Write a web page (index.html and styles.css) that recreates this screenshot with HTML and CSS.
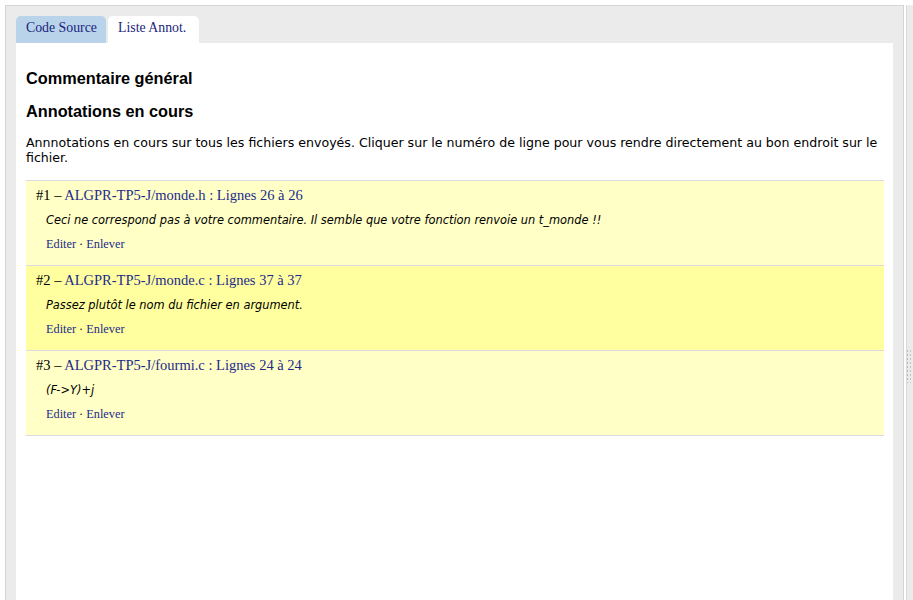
FILE: index.html
```html
<!DOCTYPE html>
<html lang="fr">
<head>
<meta charset="utf-8">
<title>Liste Annot.</title>
<link rel="stylesheet" href="styles.css">
</head>
<body>
<div class="layout">
  <div class="frame">
    <div class="tabs">
      <a class="tab tab-inactive" href="#">Code Source</a>
      <a class="tab tab-active" href="#">Liste Annot.</a>
    </div>
    <div class="panel">
      <h3 class="heading heading-first">Commentaire général</h3>
      <h3 class="heading">Annotations en cours</h3>
      <p class="intro">Annnotations en cours sur tous les fichiers envoyés. Cliquer sur le numéro de ligne pour vous rendre directement au bon endroit sur le fichier.</p>
      <ul class="annots">
        <li class="annot">
          <div class="annot-title">#1 – <a href="#">ALGPR-TP5-J/monde.h : Lignes 26 à 26</a></div>
          <div class="annot-text">Ceci ne correspond pas à votre commentaire. Il semble que votre fonction renvoie un t_monde !!</div>
          <div class="annot-actions"><a href="#">Editer</a> · <a href="#">Enlever</a></div>
        </li>
        <li class="annot annot-hl">
          <div class="annot-title">#2 – <a href="#">ALGPR-TP5-J/monde.c : Lignes 37 à 37</a></div>
          <div class="annot-text">Passez plutôt le nom du fichier en argument.</div>
          <div class="annot-actions"><a href="#">Editer</a> · <a href="#">Enlever</a></div>
        </li>
        <li class="annot">
          <div class="annot-title">#3 – <a href="#">ALGPR-TP5-J/fourmi.c : Lignes 24 à 24</a></div>
          <div class="annot-text">(F-&gt;Y)+j</div>
          <div class="annot-actions"><a href="#">Editer</a> · <a href="#">Enlever</a></div>
        </li>
      </ul>
    </div>
  </div>
  <div class="splitter"><div class="grip"></div></div>
</div>
</body>
</html>
```
FILE: styles.css
```css
html, body {
  margin: 0;
  padding: 0;
  height: 100%;
  background: #ffffff;
  overflow: hidden;
}
body {
  font-family: "Liberation Sans", Arial, sans-serif;
  color: #000;
}
.layout {
  display: flex;
  height: 100%;
  padding: 5px 0 0 5px;
  box-sizing: border-box;
}
.frame {
  width: 900px;
  box-sizing: border-box;
  background: #ebebeb;
  border: 1px solid #d5d5d5;
  border-bottom: none;
  padding: 10px 10px 0 10px;
  display: flex;
  flex-direction: column;
}
.tabs {
  display: flex;
  gap: 2px;
  height: 27px;
}
.tab {
  display: block;
  font-family: "Liberation Serif", "Times New Roman", serif;
  font-size: 13.8px;
  line-height: 23px;
  text-decoration: none;
  color: #1b2580;
  border-radius: 5px 5px 0 0;
  padding: 0 0 4px 10px;
  box-sizing: border-box;
}
.tab-inactive {
  width: 90px;
  background: #b8d3ea;
}
.tab-active {
  width: 91px;
  background: #ffffff;
  color: #221f7e;
}
.panel {
  flex: 1;
  background: #ffffff;
  padding: 10px 7px 0 10px;
}
.heading {
  margin: 15px 0 0;
  font-size: 16.3px;
  line-height: 18px;
  font-weight: bold;
}
.heading-first {
  margin-top: 16px;
}
.intro {
  margin: 15px 0 0;
  font-family: "DejaVu Sans", sans-serif;
  font-size: 12.6px;
  line-height: 15px;
}
.annots {
  list-style: none;
  margin: 15px 2px 0 0;
  padding: 0;
  border-top: 1px solid #dcdce0;
}
.annot {
  background: #ffffc6;
  border-bottom: 1px solid #dcdce0;
  padding: 3px 10px 0;
  height: 85px;
  box-sizing: border-box;
}
.annot-hl {
  background: #ffff9f;
}
.annot a {
  color: #1d2b8c;
  text-decoration: none;
}
.annot-title {
  font-family: "Liberation Serif", "Times New Roman", serif;
  font-size: 14.5px;
  line-height: 22px;
}
.annot-text {
  margin: 6px 0 0 10px;
  font-family: "DejaVu Sans", sans-serif;
  font-style: italic;
  font-size: 11.4px;
  line-height: 16px;
}
.annot-actions {
  margin: 8px 0 0 10px;
  font-family: "Liberation Serif", "Times New Roman", serif;
  font-size: 12.3px;
  line-height: 16px;
}
.splitter {
  margin-left: 2px;
  width: 6px;
  background: #ebebeb;
  border-left: 1px solid #dadada;
  position: relative;
}
.grip {
  position: absolute;
  left: 0;
  top: 345px;
  width: 4px;
  height: 33px;
  background:
    repeating-linear-gradient(to bottom, #b9b9b9 0 2px, transparent 2px 4px) left / 1px 100% no-repeat,
    repeating-linear-gradient(to bottom, #c4c4c4 0 2px, transparent 2px 4px) 3px 0 / 1px 100% no-repeat;
}
```
